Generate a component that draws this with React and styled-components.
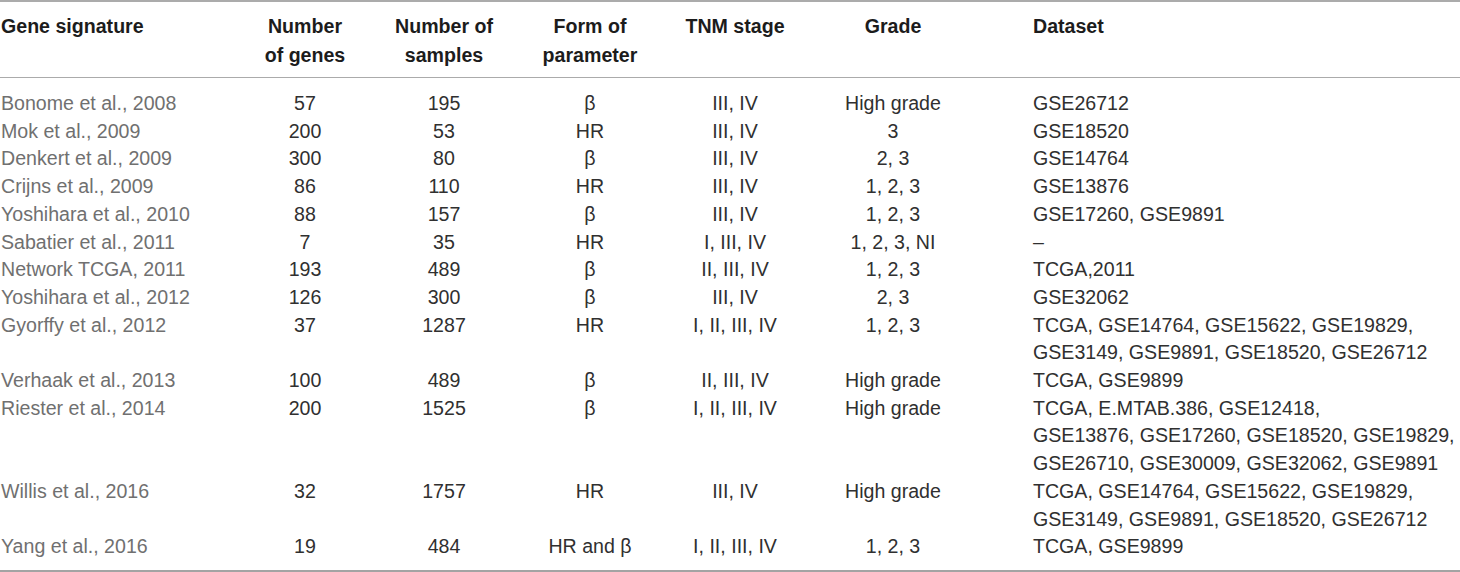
import React from "react";
import styled, { createGlobalStyle } from "styled-components";

const Global = createGlobalStyle`
  html, body { margin: 0; padding: 0; background: #ffffff; }
  body { font-family: "Liberation Sans", Arial, Helvetica, sans-serif; }
`;

const Table = styled.table`
  width: 1460px;
  border-collapse: collapse;
  table-layout: fixed;
  font-size: 19.6px;
  border-top: 2px solid #ababab;
  border-bottom: 2px solid #a3a3a3;
`;

const Head = styled.thead`
  border-bottom: 1px solid #ababab;
`;

const HeadCell = styled.th`
  font-weight: bold;
  color: #1c1c1c;
  line-height: 29px;
  padding: 10px 0 7px ${(p) => p.$pl || 0}px;
  text-align: ${(p) => p.$align || "center"};
  vertical-align: top;
  white-space: nowrap;
`;

const Cell = styled.td`
  color: ${(p) => (p.$muted ? "#707070" : "#303030")};
  line-height: 27.7px;
  padding: ${(p) => (p.$first ? 12 : 0)}px 0 ${(p) => (p.$last ? 9 : 0)}px
    ${(p) => p.$pl || 0}px;
  text-align: ${(p) => p.$align || "center"};
  vertical-align: top;
  white-space: nowrap;
`;

const cols = [236, 138, 140, 152, 138, 178, 478];

const rows = [
  ["Bonome et al., 2008", "57", "195", "β", "III, IV", "High grade", ["GSE26712"]],
  ["Mok et al., 2009", "200", "53", "HR", "III, IV", "3", ["GSE18520"]],
  ["Denkert et al., 2009", "300", "80", "β", "III, IV", "2, 3", ["GSE14764"]],
  ["Crijns et al., 2009", "86", "110", "HR", "III, IV", "1, 2, 3", ["GSE13876"]],
  ["Yoshihara et al., 2010", "88", "157", "β", "III, IV", "1, 2, 3", ["GSE17260, GSE9891"]],
  ["Sabatier et al., 2011", "7", "35", "HR", "I, III, IV", "1, 2, 3, NI", ["–"]],
  ["Network TCGA, 2011", "193", "489", "β", "II, III, IV", "1, 2, 3", ["TCGA,2011"]],
  ["Yoshihara et al., 2012", "126", "300", "β", "III, IV", "2, 3", ["GSE32062"]],
  [
    "Gyorffy et al., 2012", "37", "1287", "HR", "I, II, III, IV", "1, 2, 3",
    ["TCGA, GSE14764, GSE15622, GSE19829,", "GSE3149, GSE9891, GSE18520, GSE26712"],
  ],
  ["Verhaak et al., 2013", "100", "489", "β", "II, III, IV", "High grade", ["TCGA, GSE9899"]],
  [
    "Riester et al., 2014", "200", "1525", "β", "I, II, III, IV", "High grade",
    [
      "TCGA, E.MTAB.386, GSE12418,",
      "GSE13876, GSE17260, GSE18520, GSE19829,",
      "GSE26710, GSE30009, GSE32062, GSE9891",
    ],
  ],
  [
    "Willis et al., 2016", "32", "1757", "HR", "III, IV", "High grade",
    ["TCGA, GSE14764, GSE15622, GSE19829,", "GSE3149, GSE9891, GSE18520, GSE26712"],
  ],
  ["Yang et al., 2016", "19", "484", "HR and β", "I, II, III, IV", "1, 2, 3", ["TCGA, GSE9899"]],
];

export default function App() {
  return (
    <>
      <Global />
      <Table>
        <colgroup>
          {cols.map((w, i) => (
            <col key={i} style={{ width: w }} />
          ))}
        </colgroup>
        <Head>
          <tr>
            <HeadCell $align="left" $pl={1}>Gene signature</HeadCell>
            <HeadCell>Number<br />of genes</HeadCell>
            <HeadCell>Number of<br />samples</HeadCell>
            <HeadCell>Form of<br />parameter</HeadCell>
            <HeadCell>TNM stage</HeadCell>
            <HeadCell>Grade</HeadCell>
            <HeadCell $align="left" $pl={51}>Dataset</HeadCell>
          </tr>
        </Head>
        <tbody>
          {rows.map((r, i) => {
            const first = i === 0;
            const last = i === rows.length - 1;
            return (
              <tr key={i}>
                <Cell $align="left" $muted $pl={1} $first={first} $last={last}>{r[0]}</Cell>
                <Cell $first={first} $last={last}>{r[1]}</Cell>
                <Cell $first={first} $last={last}>{r[2]}</Cell>
                <Cell $first={first} $last={last}>{r[3]}</Cell>
                <Cell $first={first} $last={last}>{r[4]}</Cell>
                <Cell $first={first} $last={last}>{r[5]}</Cell>
                <Cell $align="left" $pl={51} $first={first} $last={last}>
                  {r[6].map((line, j) => (
                    <React.Fragment key={j}>
                      {j > 0 && <br />}
                      {line}
                    </React.Fragment>
                  ))}
                </Cell>
              </tr>
            );
          })}
        </tbody>
      </Table>
    </>
  );
}
